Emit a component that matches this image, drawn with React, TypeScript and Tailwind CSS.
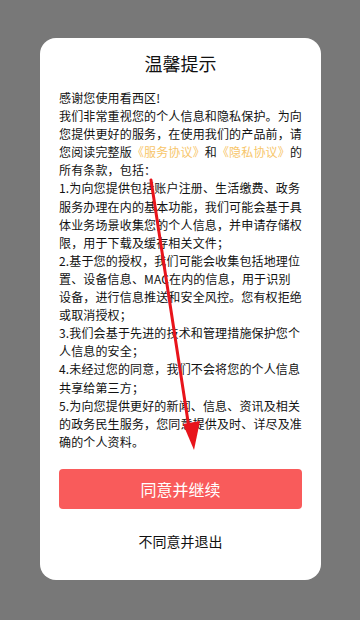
import React from "react";

const font = { fontFamily: '"Noto Sans CJK SC", "Noto Sans", sans-serif' };

const Link = ({ children }: { children: React.ReactNode }) => (
  <span className="text-[#f7c66a]">{children}</span>
);

const lines: React.ReactNode[] = [
  "感谢您使用看西区!",
  "我们非常重视您的个人信息和隐私保护。为向",
  "您提供更好的服务，在使用我们的产品前，请",
  <>
    您阅读完整版<Link>《服务协议》</Link>和<Link>《隐私协议》</Link>的
  </>,
  "所有条款，包括：",
  "1.为向您提供包括账户注册、生活缴费、政务",
  "服务办理在内的基本功能，我们可能会基于具",
  "体业务场景收集您的个人信息，并申请存储权",
  "限，用于下载及缓存相关文件；",
  "2.基于您的授权，我们可能会收集包括地理位",
  "置、设备信息、MAC在内的信息，用于识别",
  "设备，进行信息推送和安全风控。您有权拒绝",
  "或取消授权；",
  "3.我们会基于先进的技术和管理措施保护您个",
  "人信息的安全；",
  "4.未经过您的同意，我们不会将您的个人信息",
  "共享给第三方；",
  "5.为向您提供更好的新闻、信息、资讯及相关",
  "的政务民生服务，您同意提供及时、详尽及准",
  "确的个人资料。",
];

export default function App() {
  return (
    <div className="relative w-[360px] h-[620px] bg-[#787878] pt-[38px] px-[40px]" style={font}>
      <div className="w-[281px] h-[542px] bg-white rounded-[16px] flex flex-col items-center pt-[13px]">
        <div className="text-[18px] leading-[24px] text-[#111]">温馨提示</div>
        <div className="w-[243px] mt-[14px] text-[12px] leading-[18.1px] text-[#111] tracking-[0.15px]">
          {lines.map((l, i) => (
            <div key={i} className="whitespace-nowrap">
              {l}
            </div>
          ))}
        </div>
        <button className="mt-[18px] w-[243px] h-[40px] rounded-[4px] bg-[#f95b5b] text-white text-[16px] leading-[20px]">
          同意并继续
        </button>
        <div className="mt-[22px] text-[14px] leading-[20px] text-[#111]">不同意并退出</div>
      </div>
      <svg className="absolute left-0 top-0 pointer-events-none" width="360" height="620" viewBox="0 0 360 620">
        <line x1="151" y1="180" x2="189" y2="428" stroke="#e8141b" strokeWidth="3" strokeLinecap="round" />
        <polygon points="183,424 200,421 194,450" fill="#e8141b" />
      </svg>
    </div>
  );
}
